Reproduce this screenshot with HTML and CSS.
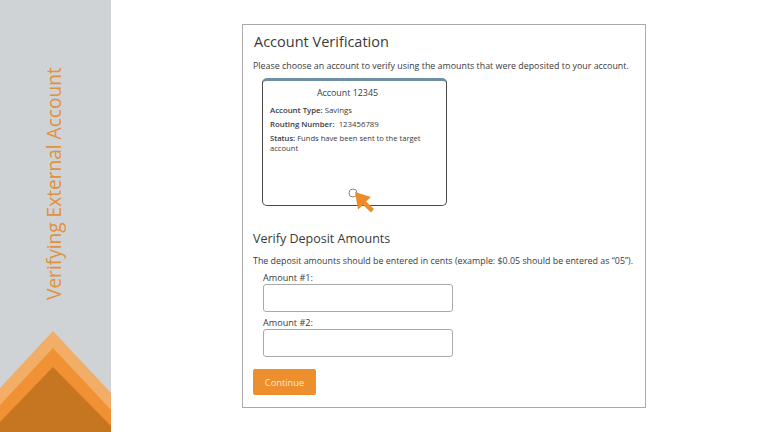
FILE: index.html
```html
<!DOCTYPE html>
<html lang="en">
<head>
    <meta charset="UTF-8">
    <meta name="viewport" content="width=device-width, initial-scale=1.0">
    <title>Verifying External Account</title>
    <link rel="stylesheet" href="styles.css">
</head>
<body>

<aside class="sidebar">
    <h1 class="sidebar-title">Verifying External Account</h1>
    <svg class="sidebar-art" width="111" height="101" viewBox="0 0 111 101">
        <polygon points="53,0 112,63 112,101 0,101 0,57" fill="#f2ad66"/>
        <polygon points="53,17 112,80 112,101 0,101 0,74" fill="#f09233"/>
        <polygon points="53,36 112,96 112,101 0,101 0,91" fill="#c67520"/>
    </svg>
</aside>

<main class="content">
    <section class="panel">
        <h2 class="panel-title">Account Verification</h2>
        <p class="panel-text">Please choose an account to verify using the amounts that were deposited to your account.</p>

        <div class="account-card">
            <h3>Account 12345</h3>
            <p><b>Account Type:</b> Savings</p>
            <p><b>Routing Number:</b>&nbsp; 123456789</p>
            <p class="status"><b>Status:</b>Funds have been sent to the target account</p>
            <svg class="cursor" width="28" height="28" viewBox="0 0 28 28">
                <circle cx="6" cy="7" r="4" fill="none" stroke="#8a8a8a" stroke-width="1"/>
                <polygon points="8,6 24,11 19,15.5 27,23 24,26.5 16,19 11,23.5" fill="#ee8b2b"/>
            </svg>
        </div>

        <h2 class="section-title">Verify Deposit Amounts</h2>
        <p class="panel-text">The deposit amounts should be entered in cents (example: $0.05 should be entered as “05”).</p>

        <div class="amount-field">
            <label for="amount1">Amount #1:</label>
            <input id="amount1" type="text">
        </div>
        <div class="amount-field">
            <label for="amount2">Amount #2:</label>
            <input id="amount2" type="text">
        </div>

        <button class="continue">Continue</button>
    </section>
</main>

</body>
</html>
```

FILE: styles.css
```css
/* General Styles */
html, body {
    height: 100%;
}
body {
    font-family: "Open Sans", sans-serif;
    margin: 0;
    display: flex;
    background-color: white;
    color: #3a3a3a;
    overflow: hidden;
}
.sidebar {
    position: relative;
    width: 111px;
    height: 432px;
    flex-shrink: 0;
    background-color: #d0d3d5;
}
.sidebar-title {
    position: absolute;
    left: 40px;
    top: 66px;
    height: 234px;
    margin: 0;
    writing-mode: vertical-rl;
    transform: rotate(180deg);
    text-align: left;
    white-space: nowrap;
    font-size: 19.1px;
    line-height: 28px;
    font-weight: 400;
    color: #e0913f;
}
.sidebar-art {
    position: absolute;
    left: 0;
    bottom: 0;
}
.content {
    flex: 1;
    padding: 24px 122px 24px 131px;
}
.panel {
    box-sizing: border-box;
    width: 404px;
    height: 384px;
    padding: 7px 10px;
    border: 1px solid #a9a9a9;
}
.panel-title {
    margin: 0 0 0 1px;
    font-size: 14.5px;
    line-height: 20px;
    font-weight: 400;
}
.section-title {
    margin: 0;
    font-size: 12.5px;
    line-height: 16px;
    font-weight: 400;
}
.panel-text {
    margin: 7px 0 0;
    font-size: 8.87px;
    line-height: 14px;
    white-space: nowrap;
}
.section-title + .panel-text {
    margin-top: 7px;
}
.account-card {
    position: relative;
    box-sizing: border-box;
    width: 185px;
    height: 128px;
    margin: 5px 0 25px 9px;
    padding: 5px 7px;
    border: 1px solid #4a4a4a;
    border-top: 3px solid #6f8fa3;
    border-radius: 5px;
    font-size: 7.8px;
    line-height: 10px;
}
.account-card h3 {
    margin: 0 0 5px;
    padding-right: 14px;
    font-size: 8.9px;
    line-height: 14px;
    font-weight: 400;
    text-align: center;
}
.account-card p {
    margin: 0 0 4px;
}
.account-card b {
    font-weight: 600;
}
.account-card .status {
    font-size: 7.6px;
}
.status b {
    margin-right: 2px;
}
.cursor {
    position: absolute;
    left: 84px;
    top: 105px;
}
.amount-field {
    margin: 3px 0 0 10px;
}
.amount-field + .amount-field {
    margin-top: 4px;
}
.amount-field label {
    display: block;
    font-size: 9.1px;
    line-height: 13px;
}
.amount-field input {
    display: block;
    box-sizing: border-box;
    width: 190px;
    height: 28px;
    border: 1px solid #a9a9a9;
    border-radius: 3px;
    background-color: white;
}
.continue {
    display: block;
    width: 63px;
    height: 26px;
    margin-top: 12px;
    padding: 0;
    border: none;
    border-radius: 2px;
    background-color: #ee8f2e;
    color: #fbe6cf;
    font-family: "Open Sans", sans-serif;
    font-size: 9.3px;
}
```
